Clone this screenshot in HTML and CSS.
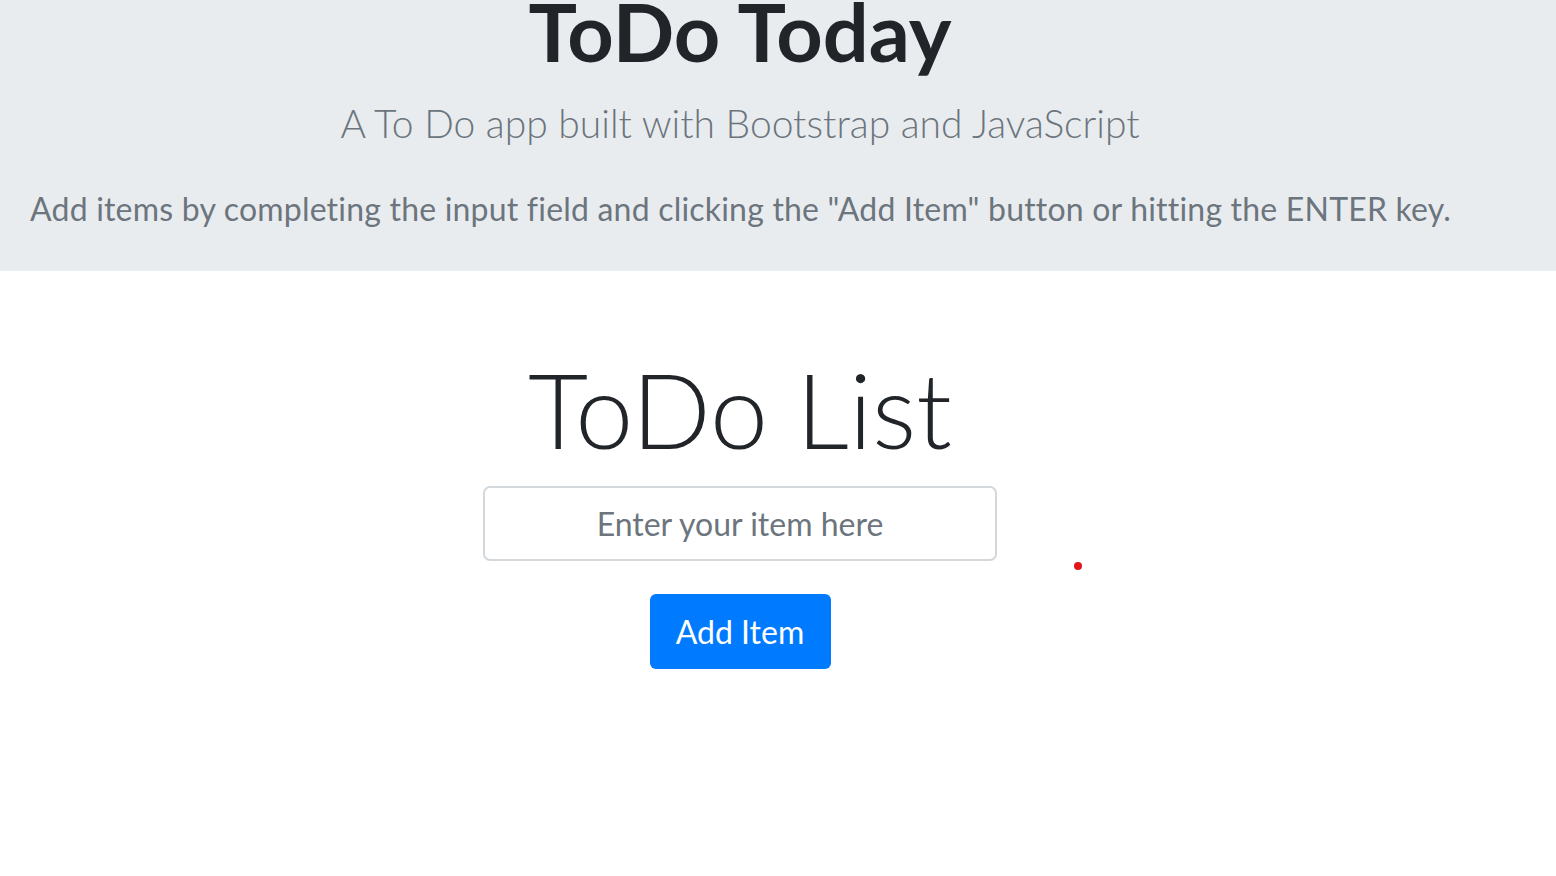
FILE: index.html
```html
<!DOCTYPE html>
<html lang="en">
<head>
<meta charset="utf-8">
<title>ToDo Today</title>
<link rel="stylesheet" href="styles.css">
</head>
<body>
<header class="jumbotron">
  <div class="container">
    <h1 class="title">ToDo Today</h1>
    <p class="lead">A To Do app built with Bootstrap and JavaScript</p>
    <p class="intro">Add items by completing the input field and clicking the "Add Item" button or hitting the ENTER key.</p>
  </div>
</header>
<main class="container main">
  <h2 class="list-title">ToDo List</h2>
  <form class="todo-form" onsubmit="return false">
    <input class="todo-input" type="text" placeholder="Enter your item here">
    <button class="btn-add" type="submit">Add Item</button>
  </form>
  <span class="dot"></span>
</main>
</body>
</html>
```
FILE: styles.css
```css
html, body {
  margin: 0;
  padding: 0;
  background: #fff;
  font-family: Lato, "Open Sans", sans-serif;
  font-variant-ligatures: none;
  color: #212529;
}
.container {
  width: 1480px;
  box-sizing: border-box;
  padding: 0 30px;
}
.jumbotron {
  background: #e9ecef;
  height: 271px;
  overflow: hidden;
}
.title {
  margin: -9px 0 0;
  font-size: 81px;
  line-height: 80px;
  font-weight: 700;
  text-align: center;
  color: #212529;
}
.lead {
  margin: 28px 0 0;
  font-size: 39px;
  line-height: 48px;
  font-weight: 300;
  text-align: center;
  color: #6c757d;
}
.intro {
  margin: 42px 0 0;
  font-size: 32px;
  line-height: 40px;
  font-weight: 400;
  letter-spacing: 0.2px;
  color: #6c757d;
  white-space: nowrap;
}
.main {
  position: relative;
  display: flex;
  flex-direction: column;
  align-items: center;
}
.list-title {
  margin: 78px 0 0;
  font-size: 104px;
  line-height: 120px;
  font-weight: 300;
  color: #212529;
}
.todo-form {
  display: flex;
  flex-direction: column;
  align-items: center;
  gap: 33px;
  margin-top: 17px;
}
.todo-input {
  width: 514px;
  height: 75px;
  box-sizing: border-box;
  border: 2px solid #d3d8dd;
  border-radius: 7px;
  font-family: inherit;
  font-size: 32px;
  text-align: center;
  color: #495057;
  outline: none;
}
.todo-input::placeholder {
  color: #6c757d;
}
.btn-add {
  width: 181px;
  height: 75px;
  border: 0;
  border-radius: 6px;
  background: #007bff;
  color: #fff;
  font-family: inherit;
  font-size: 32px;
}
.dot {
  position: absolute;
  left: 1074px;
  top: 291px;
  width: 8px;
  height: 8px;
  border-radius: 50%;
  background: #e0161b;
}
```
